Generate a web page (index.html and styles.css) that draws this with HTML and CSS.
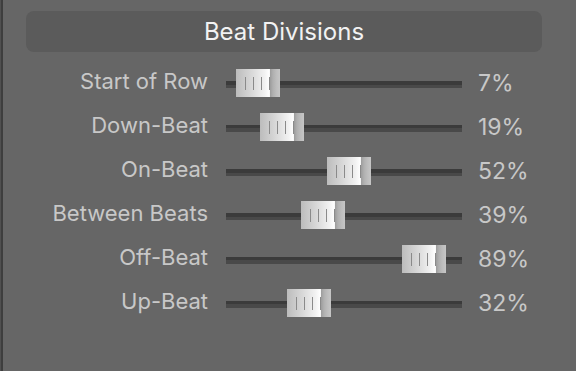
FILE: index.html
```html
<!DOCTYPE html>
<html lang="en">
<head>
    <meta charset="UTF-8">
    <title>Beat Divisions</title>
    <link rel="stylesheet" href="styles.css">
</head>
<body>
    <div class="panel">
        <div class="panel-title">Beat Divisions</div>
        <div class="rows">
            <div class="label">Start of Row</div>
            <div class="track"><div class="thumb" style="left: 10.1px"></div></div>
            <div class="value">7%</div>

            <div class="label">Down-Beat</div>
            <div class="track"><div class="thumb" style="left: 34.4px"></div></div>
            <div class="value">19%</div>

            <div class="label">On-Beat</div>
            <div class="track"><div class="thumb" style="left: 101px"></div></div>
            <div class="value">52%</div>

            <div class="label">Between Beats</div>
            <div class="track"><div class="thumb" style="left: 74.8px"></div></div>
            <div class="value">39%</div>

            <div class="label">Off-Beat</div>
            <div class="track"><div class="thumb" style="left: 175.8px"></div></div>
            <div class="value">89%</div>

            <div class="label">Up-Beat</div>
            <div class="track"><div class="thumb" style="left: 60.6px"></div></div>
            <div class="value">32%</div>
        </div>
    </div>
</body>
</html>
```

FILE: styles.css
```css
html, body {
    height: 100%;
}
body {
    margin: 0;
    background-color: #666;
    font-family: Inter, "Liberation Sans", sans-serif;
    overflow: hidden;
}
.panel {
    height: 100%;
    box-sizing: border-box;
    border-left: 1px solid #505050;
    box-shadow: inset 2px 0 0 #3e3e3e;
    padding: 11px 0 0 25px;
}
.panel-title {
    width: 516px;
    height: 41px;
    box-sizing: border-box;
    background-color: #5b5b5b;
    border-radius: 8px;
    color: #f2f2f2;
    font-size: 24px;
    line-height: 41px;
    text-align: center;
}
.rows {
    display: grid;
    grid-template-columns: 200px 236px 100px;
    grid-auto-rows: 44px;
    margin-top: 10px;
    align-items: center;
}
.label {
    color: #c8c8c8;
    font-size: 22px;
    text-align: right;
    padding-right: 18px;
    margin-top: -6px;
}
.value {
    color: #c8c8c8;
    font-size: 23px;
    padding-left: 16px;
    margin-top: -2px;
}
.track {
    position: relative;
    height: 7px;
    background: linear-gradient(#3b3b3b 0, #3b3b3b 50%, #494949 50%, #494949 100%);
}
.thumb {
    position: absolute;
    top: -12px;
    width: 44px;
    height: 28px;
    background: linear-gradient(to right, #bcbcbc 0%, #d8d8d8 35%, #f2f2f2 65%, #ffffff 76%, #9e9e9e 78%, #b0b0b0 84%, #bdbdbd 92%, #c6c6c6 100%);
}
.thumb::before {
    content: "";
    position: absolute;
    left: 9px;
    top: 8px;
    width: 25px;
    height: 13px;
    background: repeating-linear-gradient(to right, #8a8a8a 0, #8a8a8a 1px, transparent 1px, transparent 8px);
}
```
